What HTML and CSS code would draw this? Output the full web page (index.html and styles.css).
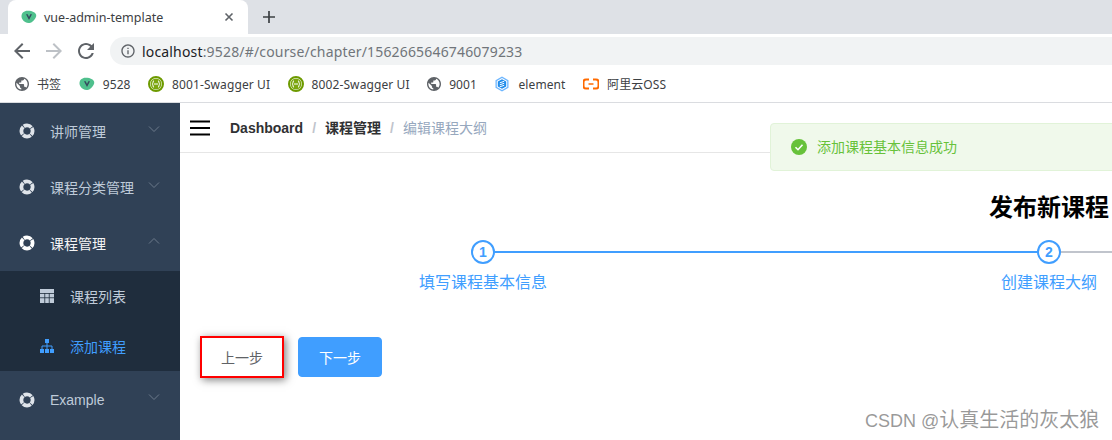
FILE: index.html
```html
<!DOCTYPE html>
<html lang="en">
<head>
  <meta charset="UTF-8">
  <meta name="viewport" content="width=device-width, initial-scale=1.0">
  <title>vue-admin-template</title>
  <link rel="stylesheet" href="styles.css">
</head>
<body>
  <svg class="defs" width="0" height="0">
    <symbol id="globe" viewBox="2 2 20 20"><path d="M12 2C6.48 2 2 6.48 2 12s4.48 10 10 10 10-4.48 10-10S17.52 2 12 2zm-1 17.93c-3.95-.49-7-3.85-7-7.93 0-.62.08-1.21.21-1.79L9 15v1c0 1.1.9 2 2 2v1.93zm6.9-2.54c-.26-.81-1-1.39-1.9-1.39h-1v-3c0-.55-.45-1-1-1H8v-2h2c.55 0 1-.45 1-1V7h2c1.1 0 2-.9 2-2v-.41c2.93 1.19 5 4.06 5 7.41 0 2.08-.8 3.97-2.1 5.39z"/></symbol>
    <symbol id="vue" viewBox="0 0 16 16"><path d="M.5 7.500C.5 4 3 1.800 6.500 1.800c2.500 0 5 .4 7 1.700 2 1.300 2.300 3.500 1 5.500-1.400 2.300-3.500 4.700-6 5-3 .3-5.500-1.200-7-3.500C.8 9.500.5 8.500.5 7.500z" fill="#4fc08d"/><path d="M5 5.200h1.700L8 8l1.300-2.800H11L8 11z" fill="#35495e"/></symbol>
    <symbol id="swagger" viewBox="0 0 16 16"><circle cx="8" cy="8" r="7" fill="#fff" stroke="#6d9a00" stroke-width="2"/><circle cx="8" cy="8" r="5.500" fill="#7ba60e"/><path d="M6 4.500C4.800 4.500 5.400 7.500 4.200 8c1.200.5.6 3.500 1.800 3.500M10 4.500c1.200 0 .6 3 1.800 3.500-1.200.5-.6 3.500-1.800 3.500M6 8h4" fill="none" stroke="#fff" stroke-width="1"/></symbol>
    <symbol id="help" viewBox="0 0 16 16"><circle cx="8" cy="8" r="5.600" fill="none" stroke="currentColor" stroke-width="3.800" stroke-dasharray="8.100 .7" stroke-dashoffset="4.050"/></symbol>
    <symbol id="chevron" viewBox="0 0 12 12"><path d="M1 3.500l5 5 5-5" fill="none" stroke="currentColor"/></symbol>
  </svg>

  <div class="tabstrip">
    <div class="tab">
      <svg class="fav"><use href="#vue"/></svg>
      <span class="tab-title">vue-admin-template</span>
      <svg class="tab-close" viewBox="0 0 10 10"><path d="M1.500 1.500l7 7M8.500 1.500l-7 7"/></svg>
    </div>
    <svg class="new-tab" viewBox="0 0 12 12"><path d="M6 0v12M0 6h12"/></svg>
  </div>

  <div class="toolbar">
    <svg class="nav-icon" viewBox="0 0 24 24"><path d="M20 11H7.830l5.590-5.590L12 4l-8 8 8 8 1.410-1.410L7.830 13H20v-2z"/></svg>
    <svg class="nav-icon off" viewBox="0 0 24 24"><path d="M12 4l-1.410 1.410L16.170 11H4v2h12.170l-5.580 5.590L12 20l8-8z"/></svg>
    <svg class="nav-icon" viewBox="0 0 24 24"><path d="M17.650 6.350C16.200 4.900 14.210 4 12 4c-4.420 0-7.990 3.580-7.990 8s3.570 8 7.990 8c3.730 0 6.840-2.550 7.730-6h-2.080c-.82 2.330-3.040 4-5.650 4-3.310 0-6-2.690-6-6s2.690-6 6-6c1.660 0 3.140.69 4.220 1.780L13 11h7V4l-2.350 2.350z"/></svg>
    <div class="omnibox">
      <svg class="info" viewBox="0 0 24 24"><path d="M11 7h2v2h-2zm0 4h2v6h-2zm1-9C6.480 2 2 6.480 2 12s4.480 10 10 10 10-4.480 10-10S17.520 2 12 2zm0 18c-4.410 0-8-3.590-8-8s3.590-8 8-8 8 3.590 8 8-3.590 8-8 8z"/></svg>
      <span class="url"><b>localhost</b>:9528/#/course/chapter/1562665646746079233</span>
    </div>
  </div>

  <div class="bookmarks">
    <div class="bookmark"><svg class="fav globe"><use href="#globe"/></svg>书签</div>
    <div class="bookmark"><svg class="fav"><use href="#vue"/></svg>9528</div>
    <div class="bookmark"><svg class="fav"><use href="#swagger"/></svg>8001-Swagger UI</div>
    <div class="bookmark"><svg class="fav"><use href="#swagger"/></svg>8002-Swagger UI</div>
    <div class="bookmark"><svg class="fav globe"><use href="#globe"/></svg>9001</div>
    <div class="bookmark">
      <svg class="fav" viewBox="0 0 16 16"><path d="M8 .5l6.500 3.700v7.600L8 15.500l-6.500-3.700V4.200z" fill="#6cb6ff"/><path d="M8 2l5.200 3v6L8 14l-5.200-3V5z" fill="#fff"/><path d="M8 3.200l4.200 2.400v4.800L8 12.800l-4.200-2.400V5.600z" fill="#1f8ceb"/><path d="M5.800 6.800l4.400-1.500M5.800 8.800l4.400-1.500M5.800 10.800l4.400-1.500" stroke="#fff" fill="none"/></svg>
      element
    </div>
    <div class="bookmark">
      <svg class="fav" viewBox="0 0 16 16"><path d="M6 3.500H3C1.500 3.500 .5 4.500.5 6v4c0 1.500 1 2.500 2.500 2.500h3M10 3.500h3c1.500 0 2.500 1 2.500 2.500v4c0 1.500-1 2.500-2.500 2.500h-3" fill="none" stroke="#ff6a00" stroke-width="2"/><path d="M5.500 8h5" stroke="#ff6a00" stroke-width="1.500"/></svg>
      阿里云OSS
    </div>
  </div>

  <div class="app">
    <aside class="sidebar">
      <div class="menu-item">
        <svg class="menu-icon"><use href="#help"/></svg>
        <span>讲师管理</span>
        <svg class="arrow"><use href="#chevron"/></svg>
      </div>
      <div class="menu-item">
        <svg class="menu-icon"><use href="#help"/></svg>
        <span>课程分类管理</span>
        <svg class="arrow"><use href="#chevron"/></svg>
      </div>
      <div class="menu-item open">
        <svg class="menu-icon"><use href="#help"/></svg>
        <span>课程管理</span>
        <svg class="arrow up"><use href="#chevron"/></svg>
      </div>
      <div class="submenu">
        <div class="sub-item">
          <svg class="sub-icon" viewBox="0 0 14 14"><path d="M0 0h14v14H0z" fill="currentColor"/><path d="M0 4.500h14M0 8.750h14M4.750 4v10M9.250 4v10" stroke="#1f2d3d" stroke-width=".8"/></svg>
          <span>课程列表</span>
        </div>
        <div class="sub-item active">
          <svg class="sub-icon" viewBox="0 0 14 14"><path d="M5 0h4v4H5zM0 10h4v4H0zM5 10h4v4H5zM10 10h4v4h-4z" fill="currentColor"/><path d="M7 4v6M2 10V7h10v3" fill="none" stroke="currentColor"/></svg>
          <span>添加课程</span>
        </div>
      </div>
      <div class="menu-item last">
        <svg class="menu-icon"><use href="#help"/></svg>
        <span>Example</span>
        <svg class="arrow"><use href="#chevron"/></svg>
      </div>
    </aside>

    <main class="main">
      <div class="navbar">
        <svg class="hamburger" viewBox="0 0 20 16"><path d="M0 1.500h20M0 8h20M0 14.500h20"/></svg>
        <div class="breadcrumb">
          <span class="crumb">Dashboard</span><span class="sep">/</span><span class="crumb">课程管理</span><span class="sep">/</span><span class="crumb last">编辑课程大纲</span>
        </div>
      </div>

      <div class="content">
        <h2 class="page-title">发布新课程</h2>
        <div class="steps">
          <div class="step">
            <div class="step-head"><span class="step-line"></span><span class="step-num">1</span></div>
            <div class="step-title">填写课程基本信息</div>
          </div>
          <div class="step">
            <div class="step-head pending"><span class="step-line"></span><span class="step-num">2</span></div>
            <div class="step-title">创建课程大纲</div>
          </div>
          <div class="step"></div>
        </div>
        <div class="actions">
          <button class="button plain">上一步</button>
          <button class="button primary">下一步</button>
        </div>
      </div>
    </main>
  </div>

  <div class="toast">
    <svg class="toast-icon" viewBox="0 0 16 16"><circle cx="8" cy="8" r="8" fill="#67c23a"/><path d="M4.500 8.200l2.500 2.500 4.500-5" fill="none" stroke="#fff" stroke-width="1.600"/></svg>
    <span class="toast-text">添加课程基本信息成功</span>
  </div>

  <div class="watermark">CSDN @<span class="watermark-name">认真生活的灰太狼</span></div>
</body>
</html>
```

FILE: styles.css
```css
* {
  box-sizing: border-box;
}

html, body {
  height: 100%;
}

body {
  margin: 0;
  position: relative;
  overflow: hidden;
  background: #fff;
  font-family: "Helvetica Neue", "Liberation Sans", "Noto Sans CJK SC", sans-serif;
  color: #333;
}

.defs {
  position: absolute;
}

/* browser chrome */
.tabstrip {
  height: 34px;
  padding: 0 0 0 8px;
  display: flex;
  align-items: center;
  background: #dee1e6;
}

.tab {
  width: 240px;
  height: 34px;
  padding: 0 14px 0 13px;
  display: flex;
  align-items: center;
  background: #fff;
  border-radius: 8px 8px 0 0;
}

.fav {
  width: 16px;
  height: 16px;
  flex: none;
}

.tab-title {
  margin-left: 7px;
  font: 12.500px "Noto Sans", sans-serif;
  color: #3c4043;
  flex: 1;
}

.tab-close {
  width: 10px;
  height: 10px;
  stroke: #5f6368;
  stroke-width: 1.600;
}

.new-tab {
  width: 12px;
  height: 12px;
  margin-left: 15px;
  stroke: #3c4043;
  stroke-width: 1.700;
}

.toolbar {
  height: 34px;
  padding: 0 0 0 10px;
  display: flex;
  align-items: center;
  background: #fff;
}

.nav-icon {
  width: 24px;
  height: 24px;
  margin-right: 8px;
  fill: #5f6368;
}

.nav-icon.off {
  fill: #bdc1c6;
}

.omnibox {
  flex: 1;
  height: 28px;
  margin-left: 4px;
  padding-left: 10px;
  display: flex;
  align-items: center;
  background: #f1f3f4;
  border-radius: 14px 0 0 14px;
}

.info {
  width: 16px;
  height: 16px;
  fill: #5f6368;
}

.url {
  margin-left: 6px;
  font: 14px "Noto Sans", sans-serif;
  letter-spacing: 0.170px;
  color: #70757a;
}

.url b {
  font-weight: normal;
  color: #202124;
}

.bookmarks {
  height: 35px;
  padding: 0 0 2px 15px;
  display: flex;
  align-items: center;
  gap: 17.500px;
  background: #fff;
  border-bottom: 1px solid #dadce0;
}

.bookmark {
  display: flex;
  align-items: center;
  gap: 9px;
  font: 12px "Noto Sans", "Noto Sans CJK SC", sans-serif;
  letter-spacing: 0.100px;
  color: #3c4043;
}

.bookmark .fav {
  margin-right: -1px;
}

.globe {
  width: 14px;
  height: 14px;
  fill: #5f6368;
}

/* app */
.app {
  display: flex;
  height: 337px;
}

.sidebar {
  width: 180px;
  flex: none;
  background: #304156;
  overflow: hidden;
}

.menu-item {
  height: 56px;
  padding-left: 19px;
  display: flex;
  align-items: center;
  font-size: 14px;
  color: #bfcbd9;
  position: relative;
}

.menu-item.open {
  color: #f4f4f5;
}

.menu-item.last {
  padding-top: 2px;
}

.menu-icon {
  width: 16px;
  height: 16px;
  margin-right: 15px;
  color: #dfe4ea;
  flex: none;
}

.menu-item.open .menu-icon {
  color: #fff;
}

.arrow {
  position: absolute;
  right: 20px;
  top: 20px;
  width: 12px;
  height: 12px;
  color: #6c7a8b;
}

.arrow.up {
  transform: rotate(180deg);
}

.submenu {
  background: #1f2d3d;
}

.sub-item {
  height: 50px;
  padding-left: 40px;
  display: flex;
  align-items: center;
  gap: 16px;
  font-size: 14px;
  color: #bfcbd9;
}

.sub-item.active {
  color: #409eff;
}

.sub-icon {
  width: 14px;
  height: 14px;
  flex: none;
}

.main {
  width: 1738px;
  flex: none;
}

.navbar {
  height: 50px;
  display: flex;
  align-items: center;
  border-bottom: 1px solid #e6e6e6;
}

.hamburger {
  width: 20px;
  height: 16px;
  margin-left: 10px;
  stroke: #000;
  stroke-width: 2;
}

.breadcrumb {
  margin: 0 0 2px 20px;
  font-size: 14px;
  font-weight: 700;
  color: #303133;
}

.sep {
  margin: 0 9px;
  font-weight: 700;
  color: #c0c4cc;
}

.crumb.last {
  font-weight: 400;
  color: #97a8be;
}

.content {
  padding: 0 20px;
}

.page-title {
  margin: 0;
  padding-top: 41px;
  font-size: 24px;
  line-height: 28px;
  text-align: center;
  color: #000;
}

.steps {
  display: flex;
  margin-top: 18px;
}

.step {
  flex: 1;
  text-align: center;
}

.step-head {
  height: 24px;
  position: relative;
  --line: #409eff;
}

.step-head.pending {
  --line: #c0c4cc;
}

.step-line {
  position: absolute;
  left: 50%;
  width: 100%;
  top: 11px;
  height: 2px;
  background: var(--line);
}

.step-num {
  position: relative;
  display: inline-block;
  width: 24px;
  height: 24px;
  border: 2px solid #409eff;
  border-radius: 50%;
  background: #fff;
  font-size: 14px;
  font-weight: 700;
  line-height: 20px;
  color: #409eff;
}

.step-title {
  font-size: 16px;
  line-height: 38px;
  color: #409eff;
}

.actions {
  display: flex;
  gap: 14px;
  margin-top: 34px;
  align-items: center;
}

.button {
  width: 84px;
  height: 40px;
  border-radius: 4px;
  border: 1px solid #dcdfe6;
  font-family: inherit;
  font-size: 14px;
  cursor: pointer;
}

.plain {
  height: 42px;
  border: 2px solid #f00;
  border-radius: 0;
  background: #fff;
  color: #606266;
  box-shadow: 2px 2px 8px rgba(0, 0, 0, 0.5);
}

.primary {
  border-color: #409eff;
  background: #409eff;
  color: #fff;
}

/* overlays */
.toast {
  position: absolute;
  left: 770px;
  top: 123px;
  width: 380px;
  height: 48px;
  padding-left: 20px;
  display: flex;
  align-items: center;
  gap: 10px;
  background: #f0f9eb;
  border: 1px solid #e1f3d8;
  border-radius: 4px;
  font-size: 14px;
  color: #67c23a;
}

.toast-icon {
  width: 16px;
  height: 16px;
}

.toast-text {
  margin-bottom: 2px;
}

.watermark {
  position: absolute;
  left: 865px;
  top: 407px;
  font-size: 18px;
  line-height: 26px;
  white-space: nowrap;
  color: rgba(120, 120, 120, 0.75);
}

.watermark-name {
  font-size: 20px;
}
```
